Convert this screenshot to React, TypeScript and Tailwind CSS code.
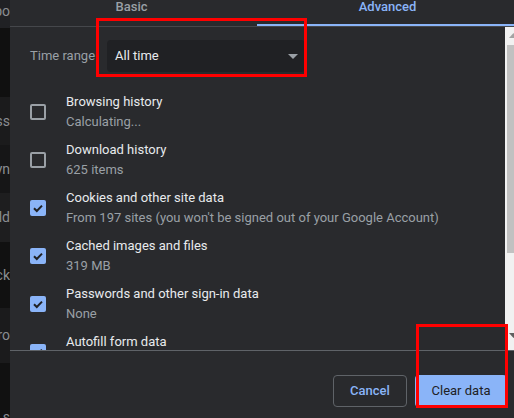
import React from "react";

const items = [
  { title: "Browsing history", sub: "Calculating...", checked: false },
  { title: "Download history", sub: "625 items", checked: false },
  { title: "Cookies and other site data", sub: "From 197 sites (you won't be signed out of your Google Account)", checked: true },
  { title: "Cached images and files", sub: "319 MB", checked: true },
  { title: "Passwords and other sign-in data", sub: "None", checked: true },
  { title: "Autofill form data", sub: "", checked: true },
];

function Checkbox({ checked }: { checked: boolean }) {
  if (checked) {
    return (
      <div className="w-[16px] h-[16px] rounded-[2px] bg-[#8ab4f8] flex items-center justify-center">
        <svg width="16" height="16" viewBox="0 0 16 16">
          <path d="M4 8.2 L6.8 11 L12 5.6" fill="none" stroke="#202124" strokeWidth="2" />
        </svg>
      </div>
    );
  }
  return <div className="w-[16px] h-[16px] rounded-[2px] border-2 border-[#9aa0a6]" />;
}

function Strip() {
  const segs = [
    { h: 28, bg: "bg-[#202124]", t: "po" },
    { h: 69, bg: "bg-[#101010]", t: "" },
    { h: 48, bg: "bg-[#1b1b1c]", t: "ass" },
    { h: 48, bg: "bg-[#161617]", t: "yn" },
    { h: 49, bg: "bg-[#1e1e1f]", t: "ld" },
    { h: 66, bg: "bg-[#111111]", t: "ck" },
    { h: 55, bg: "bg-[#1b1b1c]", t: "ro" },
    { h: 55, bg: "bg-[#111111]", t: "s" },
  ];
  return (
    <div className="w-[10px] shrink-0 flex flex-col overflow-hidden">
      {segs.map((s, i) => (
        <div
          key={i}
          style={{ height: s.h }}
          className={`${s.bg} flex ${i === 7 ? "items-end" : "items-center"} justify-end overflow-hidden whitespace-nowrap text-[14px] text-[#8a8d91]`}
        >
          <span className={i === 7 ? "leading-[10px] -mb-[4px]" : i === 0 ? "-mt-[6px]" : ""}>{s.t}</span>
        </div>
      ))}
    </div>
  );
}

export default function App() {
  return (
    <div
      className="w-[514px] h-[418px] flex overflow-hidden relative bg-[#292a2d]"
      style={{ fontFamily: "Roboto, 'Noto Sans', sans-serif" }}
    >
      <Strip />
      <div className="flex-1 flex flex-col min-w-0">
        {/* Tabs */}
        <div className="h-[27px] flex border-b border-[#45474b] shrink-0">
          <div className="w-[243px] flex justify-center text-[13px] leading-[13px] font-medium text-[#9aa0a6]">
            Basic
          </div>
          <div className="flex-1 flex flex-col pl-[8px]">
            <div className="flex-1 flex justify-center text-[13px] leading-[13px] font-medium text-[#8ab4f8]">
              Advanced
            </div>
            <div className="h-[2px] -mx-[4px] bg-[#8ab4f8]" />
          </div>
        </div>

        {/* Body */}
        <div className="h-[323px] flex shrink-0">
          <div className="flex-1 overflow-hidden pl-[20px] pt-[13px]">
            <div className="flex items-center h-[32px]">
              <div className="w-[77px] text-[13px] text-[#9aa0a6]">Time range</div>
              <div className="w-[198px] h-[32px] rounded-[4px] bg-[#202124] flex items-center justify-between pl-[8px] pr-[7px]">
                <span className="text-[13px] text-[#e8eaed]">All time</span>
                <svg width="10" height="5" viewBox="0 0 10 5">
                  <polygon points="0,0 10,0 5,5" fill="#9aa0a6" />
                </svg>
              </div>
            </div>
            <div className="mt-[16px] flex flex-col">
              {items.map((it) => (
                <div key={it.title} className="h-[48px] shrink-0 flex items-center">
                  <div className="w-[36px] shrink-0">
                    <Checkbox checked={it.checked} />
                  </div>
                  <div className="flex flex-col whitespace-nowrap">
                    <div className="text-[13px] leading-[20px] text-[#e8eaed]">{it.title}</div>
                    <div className="text-[13px] leading-[20px] text-[#9aa0a6]">{it.sub || "\u00a0"}</div>
                  </div>
                </div>
              ))}
            </div>
          </div>
          {/* Scrollbar */}
          <div className="w-[9px] shrink-0 overflow-hidden bg-[#f1f1f1]">
            <div className="w-[17px] h-full flex flex-col">
              <svg width="17" height="18" viewBox="0 0 17 18" className="shrink-0">
                <polygon points="4,11 8.5,6 13,11" fill="#a3a3a3" />
              </svg>
              <div className="ml-[2px] w-[13px] h-[208px] bg-[#c1c1c1] shrink-0" />
              <div className="flex-1" />
              <svg width="17" height="18" viewBox="0 0 17 18" className="shrink-0 mb-[5px]">
                <polygon points="4,6 13,6 8.5,11" fill="#606060" />
              </svg>
            </div>
          </div>
        </div>

        {/* Footer */}
        <div className="flex-1 border-t border-[#5f6368] flex justify-end items-start pt-[24px] pr-[7px] gap-[8px]">
          <button className="w-[74px] h-[32px] rounded-[4px] border border-[#5f6368] text-[13px] font-medium text-[#8ab4f8] flex items-center justify-center">
            Cancel
          </button>
          <button className="w-[92px] h-[32px] rounded-[4px] bg-[#8ab4f8] text-[13px] text-[#202124] flex items-center justify-center">
            Clear data
          </button>
        </div>
      </div>

      {/* Red annotation boxes */}
      <div className="absolute left-[96px] top-[18px] w-[211px] h-[59px] border-[3px] border-[#ff0000] pointer-events-none" />
      <div className="absolute left-[416px] top-[324px] w-[92px] h-[84px] border-[3px] border-[#ff0000] pointer-events-none" />
    </div>
  );
}
